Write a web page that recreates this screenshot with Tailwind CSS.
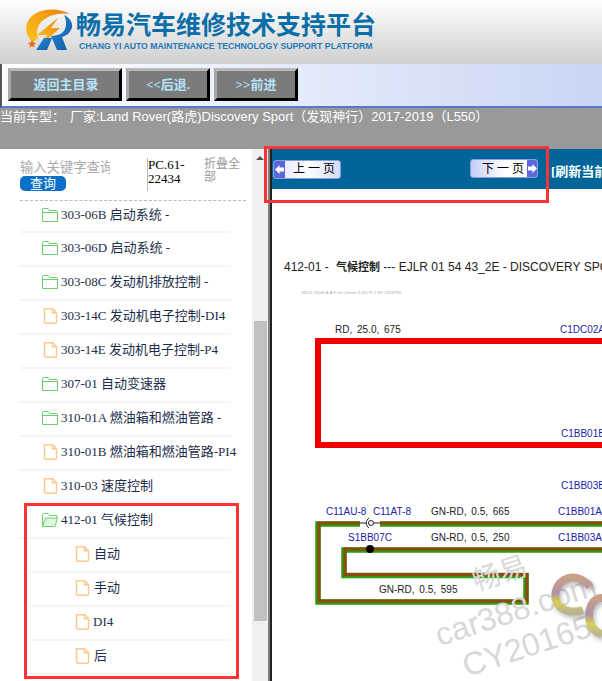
<!DOCTYPE html>
<html lang="en">
<head>
    <meta charset="UTF-8">
    <title>畅易汽车维修技术支持平台</title>
    <script src="https://cdn.jsdelivr.net/npm/@tailwindcss/browser@4"></script>
</head>
<body class="h-[681px] w-[602px] overflow-hidden bg-white font-['Liberation_Sans','Noto_Sans_CJK_SC',sans-serif]">
    <div class="relative h-[681px] w-[602px] overflow-hidden">

        <!-- header -->
        <div class="flex h-[64px] bg-gradient-to-b from-white to-[#cfcfcf] pl-[20px] pt-[5px]">
            <svg class="h-[50px] w-[56px] shrink-0" viewBox="0 0 56 50">
                <defs>
                    <linearGradient id="ring" x1="0" y1="1" x2="1" y2="0">
                        <stop offset="0" stop-color="#f8c21c"/>
                        <stop offset=".6" stop-color="#f6a015"/>
                        <stop offset="1" stop-color="#ee7a12"/>
                    </linearGradient>
                    <linearGradient id="rblue" x1="0" y1="0" x2="1" y2="1">
                        <stop offset="0" stop-color="#2a8ad4"/>
                        <stop offset="1" stop-color="#0f5aa8"/>
                    </linearGradient>
                </defs>
                <path d="M13 37C5 31 4 21 10 13C19 3 37 2 50 9C40 7 29 10 22 16C17 21 16 28 18 33Z" fill="url(#ring)"/>
                <path d="M38 13L17 30L27 30L23 38L40 23L31 23Z" fill="url(#ring)"/>
                <path d="M12 35L13.500 37.500L16 38L14 40L14.500 42.500L12 41L9.500 42.500L10 40L8 38L10.500 37.500Z" fill="#ee6a20"/>
                <path d="M16 45L24 33L32 33L27 45Z" fill="url(#rblue)"/>
                <path d="M44 10C51 13 54 20 51 25C49 29 45 31 42 32L47 45L37 45L31 31C37 31 43 29 45 24C47 19 46 14 44 10Z" fill="url(#rblue)"/>
            </svg>
            <div class="pt-[5px]">
                <div class="text-[25px] leading-[30px] font-bold text-[#0a6ea8]">畅易汽车维修技术支持平台</div>
                <div class="ml-[3px] mt-[1px] text-[8.7px] leading-[11px] font-bold whitespace-nowrap text-[#1f7ab8]">CHANG YI AUTO MAINTENANCE TECHNOLOGY SUPPORT PLATFORM</div>
            </div>
        </div>

        <!-- toolbar -->
        <div class="flex h-[44px] gap-[4px] border-b-[2px] border-l-[2px] border-b-[#5b78c8] border-l-[#555] bg-gradient-to-r from-white to-[#c9d6f4] pl-[6px] pt-[4px]">
            <div class="flex h-[33px] w-[114px] items-center justify-center border-[3px] border-t-[#b8b8b8] border-r-black border-b-black border-l-[#a8a8a8] bg-[#7b7b7b] pl-[2px] font-['Liberation_Serif','Noto_Sans_CJK_SC',serif] text-[13px] font-bold text-[#b4e2fa]">返回主目录</div>
            <div class="flex h-[33px] w-[84px] items-center justify-center border-[3px] border-t-[#b8b8b8] border-r-black border-b-black border-l-[#a8a8a8] bg-[#7b7b7b] font-['Liberation_Serif','Noto_Sans_CJK_SC',serif] text-[13px] font-bold text-[#b4e2fa]">&lt;&lt;后退.</div>
            <div class="flex h-[33px] w-[84px] items-center justify-center border-[3px] border-t-[#b8b8b8] border-r-black border-b-black border-l-[#a8a8a8] bg-[#7b7b7b] font-['Liberation_Serif','Noto_Sans_CJK_SC',serif] text-[13px] font-bold text-[#b4e2fa]">&gt;&gt;前进</div>
        </div>

        <!-- current vehicle -->
        <div class="h-[41px] bg-[#999999] text-[13px] leading-[18px] whitespace-nowrap text-white">当前车型：<span class="ml-[5px]">厂家:Land Rover(路虎)Discovery Sport（发现神行）2017-2019（L550）</span></div>

        <div class="flex h-[532px]">
            <!-- sidebar -->
            <div class="w-[252px] shrink-0 pt-[9px] pl-[20px] font-['Liberation_Serif','Noto_Sans_CJK_SC',serif]">
                <div class="flex h-[43px] w-[226px] border-b border-dashed border-[#bbb]">
                    <div class="w-[127px] shrink-0">
                        <div class="h-[18px] w-[90px] overflow-hidden font-['Liberation_Sans','Noto_Sans_CJK_SC',sans-serif] text-[13.3px] leading-[20px] whitespace-nowrap text-[#aaa]">输入关键字查询</div>
                        <div class="h-[15px] w-[46px] rounded-[5px] bg-[#0a70c8] text-center font-['Liberation_Sans','Noto_Sans_CJK_SC',sans-serif] text-[13px] leading-[15px] text-white">查询</div>
                    </div>
                    <div class="h-[33px] w-[57px] shrink-0 border-l-[1px] border-[#bbb] text-[13px] leading-[14px] text-black">PC.61-22434</div>
                    <div class="w-[38px] font-['Liberation_Sans','Noto_Sans_CJK_SC',sans-serif] text-[12px] leading-[13px] text-[#999]">折叠全部</div>
                </div>
                <div class="w-[211px] text-[13px] text-[#1c2e4a]">
                    <div class="flex h-[32px] items-center border-b-[2px] border-[#f5f5f5] pb-[2px] pl-[22px]"><svg class="mr-[3px] h-[16px] w-[16px] shrink-0" viewBox="0 0 16 16" fill="none" stroke="#6ccf6c"><path d="M.5 14.5V2.5Q.5 1.5 1.5 1.5H6L7.5 3.5H14.5Q15.5 3.5 15.5 4.5V14.5Z"/><path d="M.5 5.5H15.5"/></svg>303-06B 启动系统 -</div>
                    <div class="flex h-[34px] items-center border-b-[2px] border-[#f5f5f5] pb-[2px] pl-[22px]"><svg class="mr-[3px] h-[16px] w-[16px] shrink-0" viewBox="0 0 16 16" fill="none" stroke="#6ccf6c"><path d="M.5 14.5V2.5Q.5 1.5 1.5 1.5H6L7.5 3.5H14.5Q15.5 3.5 15.5 4.5V14.5Z"/><path d="M.5 5.5H15.5"/></svg>303-06D 启动系统 -</div>
                    <div class="flex h-[34px] items-center border-b-[2px] border-[#f5f5f5] pb-[2px] pl-[22px]"><svg class="mr-[3px] h-[16px] w-[16px] shrink-0" viewBox="0 0 16 16" fill="none" stroke="#6ccf6c"><path d="M.5 14.5V2.5Q.5 1.5 1.5 1.5H6L7.5 3.5H14.5Q15.5 3.5 15.5 4.5V14.5Z"/><path d="M.5 5.5H15.5"/></svg>303-08C 发动机排放控制 -</div>
                    <div class="flex h-[34px] items-center border-b-[2px] border-[#f5f5f5] pb-[2px] pl-[22px] whitespace-nowrap"><svg class="mr-[3px] ml-[1px] h-[16px] w-[15px] shrink-0" viewBox="0 0 15 16" fill="none" stroke="#fcc98f" stroke-width="1.5"><path d="M1.5.8H9.5L13.5 4.8V14Q13.5 15.2 12.5 15.2H2.5Q1.5 15.2 1.5 14Z"/><path d="M9.5.8V4.8H13.5"/></svg>303-14C 发动机电子控制-DI4</div>
                    <div class="flex h-[34px] items-center border-b-[2px] border-[#f5f5f5] pb-[2px] pl-[22px] whitespace-nowrap"><svg class="mr-[3px] ml-[1px] h-[16px] w-[15px] shrink-0" viewBox="0 0 15 16" fill="none" stroke="#fcc98f" stroke-width="1.5"><path d="M1.5.8H9.5L13.5 4.8V14Q13.5 15.2 12.5 15.2H2.5Q1.5 15.2 1.5 14Z"/><path d="M9.5.8V4.8H13.5"/></svg>303-14E 发动机电子控制-P4</div>
                    <div class="flex h-[34px] items-center border-b-[2px] border-[#f5f5f5] pb-[2px] pl-[22px]"><svg class="mr-[3px] h-[16px] w-[16px] shrink-0" viewBox="0 0 16 16" fill="none" stroke="#6ccf6c"><path d="M.5 14.5V2.5Q.5 1.5 1.5 1.5H6L7.5 3.5H14.5Q15.5 3.5 15.5 4.5V14.5Z"/><path d="M.5 5.5H15.5"/></svg>307-01 自动变速器</div>
                    <div class="flex h-[34px] items-center border-b-[2px] border-[#f5f5f5] pb-[2px] pl-[22px] whitespace-nowrap"><svg class="mr-[3px] h-[16px] w-[16px] shrink-0" viewBox="0 0 16 16" fill="none" stroke="#6ccf6c"><path d="M.5 14.5V2.5Q.5 1.5 1.5 1.5H6L7.5 3.5H14.5Q15.5 3.5 15.5 4.5V14.5Z"/><path d="M.5 5.5H15.5"/></svg>310-01A 燃油箱和燃油管路 -</div>
                    <div class="flex h-[34px] items-center border-b-[2px] border-[#f5f5f5] pb-[2px] pl-[22px] whitespace-nowrap"><svg class="mr-[3px] ml-[1px] h-[16px] w-[15px] shrink-0" viewBox="0 0 15 16" fill="none" stroke="#fcc98f" stroke-width="1.5"><path d="M1.5.8H9.5L13.5 4.8V14Q13.5 15.2 12.5 15.2H2.5Q1.5 15.2 1.5 14Z"/><path d="M9.5.8V4.8H13.5"/></svg>310-01B 燃油箱和燃油管路-PI4</div>
                    <div class="flex h-[34px] items-center border-b-[2px] border-[#f5f5f5] pb-[2px] pl-[22px]"><svg class="mr-[3px] ml-[1px] h-[16px] w-[15px] shrink-0" viewBox="0 0 15 16" fill="none" stroke="#fcc98f" stroke-width="1.5"><path d="M1.5.8H9.5L13.5 4.8V14Q13.5 15.2 12.5 15.2H2.5Q1.5 15.2 1.5 14Z"/><path d="M9.5.8V4.8H13.5"/></svg>310-03 速度控制</div>
                    <div class="flex h-[34px] items-center border-b-[2px] border-[#f5f5f5] pb-[2px] pl-[22px]"><svg class="mr-[3px] h-[16px] w-[16px] shrink-0" viewBox="0 0 16 16" fill="none" stroke="#6ccf6c"><path d="M.5 14.5V2.5Q.5 1.5 1.5 1.5H6L7.5 3.5H15V6"/><path d="M.5 14.5L3.5 6H15.5L13 14.5Z" fill="#dff5df"/></svg>412-01 气候控制</div>
                    <div class="ml-[10px]">
                        <div class="flex h-[34px] items-center border-b-[2px] border-[#f5f5f5] pb-[2px] pl-[45px]"><svg class="mr-[4px] h-[16px] w-[15px] shrink-0" viewBox="0 0 15 16" fill="none" stroke="#fcc98f" stroke-width="1.5"><path d="M1.5.8H9.5L13.5 4.8V14Q13.5 15.2 12.5 15.2H2.5Q1.5 15.2 1.5 14Z"/><path d="M9.5.8V4.8H13.5"/></svg>自动</div>
                        <div class="flex h-[34px] items-center border-b-[2px] border-[#f5f5f5] pb-[2px] pl-[45px]"><svg class="mr-[4px] h-[16px] w-[15px] shrink-0" viewBox="0 0 15 16" fill="none" stroke="#fcc98f" stroke-width="1.5"><path d="M1.5.8H9.5L13.5 4.8V14Q13.5 15.2 12.5 15.2H2.5Q1.5 15.2 1.5 14Z"/><path d="M9.5.8V4.8H13.5"/></svg>手动</div>
                        <div class="flex h-[34px] items-center border-b-[2px] border-[#f5f5f5] pb-[2px] pl-[45px]"><svg class="mr-[3px] h-[16px] w-[15px] shrink-0" viewBox="0 0 15 16" fill="none" stroke="#fcc98f" stroke-width="1.5"><path d="M1.5.8H9.5L13.5 4.8V14Q13.5 15.2 12.5 15.2H2.5Q1.5 15.2 1.5 14Z"/><path d="M9.5.8V4.8H13.5"/></svg>DI4</div>
                        <div class="flex h-[34px] items-center border-b-[2px] border-[#f5f5f5] pb-[2px] pl-[45px]"><svg class="mr-[4px] h-[16px] w-[15px] shrink-0" viewBox="0 0 15 16" fill="none" stroke="#fcc98f" stroke-width="1.5"><path d="M1.5.8H9.5L13.5 4.8V14Q13.5 15.2 12.5 15.2H2.5Q1.5 15.2 1.5 14Z"/><path d="M9.5.8V4.8H13.5"/></svg>后</div>
                    </div>
                </div>
            </div>

            <!-- scrollbar -->
            <div class="flex w-[16px] shrink-0 flex-col items-center bg-[#f0f0f0]">
                <div class="mt-[7px] h-0 w-0 border-x-[4px] border-b-[4px] border-x-transparent border-b-[#505050]"></div>
                <div class="mt-[161px] h-[300px] w-[13px] bg-[#c1c1c1]"></div>
            </div>
            <div class="w-[2px] shrink-0 bg-[#808080]"></div>

            <!-- document -->
            <div class="min-w-0 flex-1 border-l-[2px] border-[#222]">
                <div class="flex h-[40px] items-center bg-[#006699] pl-[1px]">
                    <div class="flex h-[19px] w-[68px] shrink-0 items-center overflow-hidden rounded-[3px] border border-[#8d9be0] bg-gradient-to-r from-[#dfe3ff] via-white to-[#d5daf8] text-[12px] text-black">
                        <span class="flex h-full w-[11px] shrink-0 items-center justify-center bg-[#5a68dc]"><svg class="h-[9px] w-[9px]" viewBox="0 0 9 9" fill="white"><path d="M0 4.5L4.5 0V2.5H9V6.5H4.5V9Z"/></svg></span>
                        <span class="ml-[8px] font-['Liberation_Serif','Noto_Sans_CJK_SC',serif] tracking-[3px] whitespace-nowrap">上一页</span>
                    </div>
                    <div class="mb-[1px] ml-[129px] flex h-[19px] w-[68px] shrink-0 items-center overflow-hidden rounded-[3px] border border-[#8d9be0] bg-gradient-to-r from-[#c5ccf5] via-white to-white text-[12px] text-black">
                        <span class="ml-[11px] font-['Liberation_Serif','Noto_Sans_CJK_SC',serif] tracking-[3px] whitespace-nowrap">下一页</span>
                        <span class="ml-auto flex h-full w-[11px] shrink-0 items-center justify-center bg-[#5a68dc]"><svg class="h-[9px] w-[9px]" viewBox="0 0 9 9" fill="white"><path d="M9 4.5L4.5 0V2.5H0V6.5H4.5V9Z"/></svg></span>
                    </div>
                    <span class="mt-[5px] ml-[13px] font-['Liberation_Serif','Noto_Sans_CJK_SC',serif] text-[13px] font-bold whitespace-nowrap text-white">[刷新当前页]</span>
                </div>

                <!-- wiring diagram -->
                <svg class="block" width="330" height="492" viewBox="272 189 330 492" font-family="Liberation Sans, Noto Sans CJK SC, sans-serif" font-size="10">
                    <text x="284" y="271" font-size="12" fill="#222">412-01 - <tspan dx="4" font-weight="bold" font-size="11">气候控制</tspan> --- EJLR 01 54 43_2E - DISCOVERY SPORT</text>
                    <text x="302" y="294" font-size="4" fill="#aaa">HK32-70508-A-A-F-04 Climate 3.500 PI-1 MY 2001PWL</text>

                    <text x="335" y="333" fill="#222" word-spacing="2">RD, 25.0, 675</text>
                    <text x="560" y="333" fill="#2222aa">C1DC02A</text>
                    <path d="M605 341H318V445H605" fill="none" stroke="#ee0000" stroke-width="6"/>
                    <text x="561" y="437" fill="#2222aa">C1BB01B</text>
                    <text x="561" y="489" fill="#2222aa">C1BB03B</text>

                    <text x="326" y="515" fill="#2222aa">C11AU-8</text>
                    <text x="373" y="515" fill="#2222aa">C11AT-8</text>
                    <text x="431" y="515" fill="#222" word-spacing="2">GN-RD, 0.5, 665</text>
                    <text x="558" y="515" fill="#2222aa">C1BB01A</text>
                    <text x="348" y="541" fill="#2222aa">S1BB07C</text>
                    <text x="431" y="541" fill="#222" word-spacing="2">GN-RD, 0.5, 250</text>
                    <text x="558" y="541" fill="#2222aa">C1BB03A</text>
                    <text x="379" y="593" fill="#222" word-spacing="2">GN-RD, 0.5, 595</text>

                    <path d="M605 524H380M360 524H318V602H526V575.500H344V550H605" fill="none" stroke="#2f9a08" stroke-width="5.500"/>
                    <path d="M605 523H380M360 523H319V601H527V574.500H345V549H605" fill="none" stroke="#8b4a10" stroke-width="3"/>
                    <path d="M360 523H366M374 523H380" stroke="#222" stroke-width="1"/>
                    <circle cx="371" cy="523" r="2.5" fill="none" stroke="#222"/>
                    <path d="M369 518A6 6 0 0 0 369 528" fill="none" stroke="#222"/>
                    <circle cx="370" cy="549" r="4" fill="black"/>
                </svg>
            </div>
        </div>

        <!-- watermark -->
        <div class="absolute top-[560px] left-[472px] -rotate-[18deg] text-[28px] leading-none text-[#d8d8d8]">畅易</div>
        <div class="absolute top-[594px] left-[432px] -rotate-[18deg] text-[32px] leading-none text-[#d8d8d8]">car388.com</div>
        <div class="absolute top-[630px] left-[460px] -rotate-[18deg] text-[32px] leading-none text-[#d8d8d8]">CY20165</div>
        <svg class="absolute top-[560px] left-[540px] blur-[0.5px] drop-shadow-[2px_3px_2px_rgba(0,0,0,0.25)]" width="62" height="90" viewBox="0 0 62 90" fill="none" stroke-width="8">
            <defs>
                <linearGradient id="cfill" x1="0" y1="0" x2="0" y2="1">
                    <stop offset="0" stop-color="#c8a088"/>
                    <stop offset=".45" stop-color="#b090a8"/>
                    <stop offset=".72" stop-color="#d8d050"/>
                    <stop offset="1" stop-color="#bdb590"/>
                </linearGradient>
            </defs>
            <path d="M50 27C44 18 32 15 24 20C15 25 13 37 18 45C24 52 35 53 43 50" stroke="url(#cfill)"/>
            <path d="M62 38C52 38 47 50 50 62C52 70 58 73 62 74" stroke="url(#cfill)"/>
        </svg>

        <!-- annotation boxes -->
        <div class="absolute top-[146px] left-[264px] h-[57px] w-[285px] border-[3px] border-[#ff3333]"></div>
        <div class="absolute top-[503px] left-[24px] h-[176px] w-[215px] border-[3px] border-[#ff3333]"></div>
    </div>
</body>
</html>
